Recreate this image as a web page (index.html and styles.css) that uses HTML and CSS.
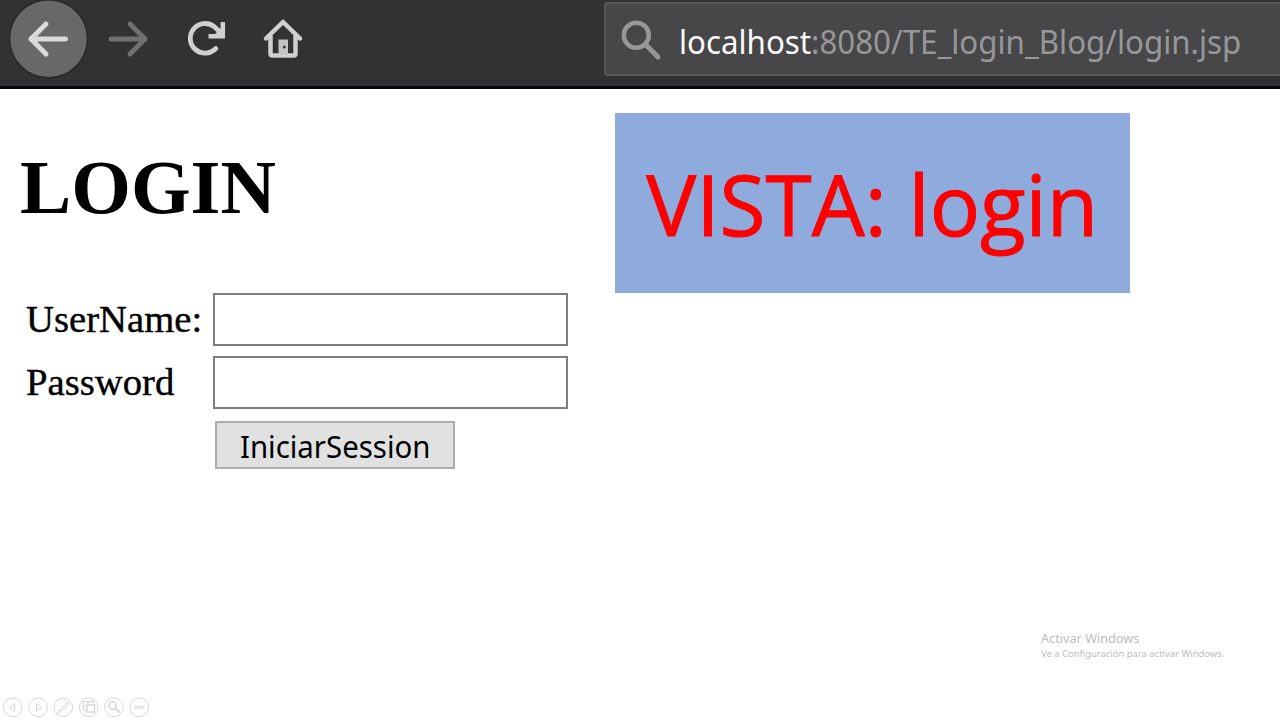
FILE: index.html
```html
<!DOCTYPE html>
<html lang="es">
<head>
<meta charset="utf-8">
<title>Login</title>
<link rel="stylesheet" href="styles.css">
</head>
<body>
<header class="toolbar">
  <svg class="nav" width="320" height="86" viewBox="0 0 320 86" fill="none" stroke-linecap="round" stroke-linejoin="round">
    <circle cx="48.500" cy="38.800" r="39" fill="#68686a" stroke="#29292b" stroke-width="1.500"/>
    <path d="M65.500 39H31M46 24L31 39l15 15" stroke="#dadada" stroke-width="5"/>
    <path d="M111 39h34M130 24l15 15-15 15" stroke="#707072" stroke-width="5"/>
    <path d="M215.800 48.500A14.800 14.800 0 1 1 214 26.500L219 31" stroke="#d0d0d0" stroke-width="4.800"/>
    <path d="M222.800 22V36.300H208.500" stroke="#d0d0d0" stroke-width="4.500" stroke-linecap="butt" stroke-linejoin="miter"/>
    <path d="M212 37L223 26V37Z" fill="#d0d0d0"/>
    <path d="M266 38.500L283 22l17 16.500M270.500 36v17.500q0 2 2 2h21q2 0 2-2V36" stroke="#d0d0d0" stroke-width="4.500"/>
    <path d="M278.500 39.500h9.500v15h-9.500z" fill="#c3c3c3"/>
    <circle cx="284.300" cy="47" r="1.500" fill="#3b3b3d"/>
  </svg>
  <div class="address">
    <svg class="search" width="42" height="42" viewBox="0 0 42 42" fill="none" stroke="#979799" stroke-linecap="round">
      <circle cx="16.300" cy="16.200" r="12.500" stroke-width="4.500"/>
      <path d="M26 26l12 12" stroke-width="5"/>
    </svg>
    <div class="url"><span class="host">localhost</span>:8080/TE_login_Blog/login.jsp</div>
  </div>
</header>
<main class="content">
  <form class="login">
    <h1 class="title">LOGIN</h1>
    <div class="fields">
      <label class="label" for="user">UserName:</label>
      <input class="input" id="user" type="text">
      <label class="label" for="pass">Password</label>
      <input class="input" id="pass" type="password">
      <button class="submit" type="button"><span class="submit-text">IniciarSession</span></button>
    </div>
  </form>
  <div class="banner"><span class="banner-text">VISTA: login</span></div>
</main>
<footer class="footer">
  <div class="notice">
    <div class="notice-title">Activar Windows</div>
    <div class="notice-text">Ve a Configuración para activar Windows.</div>
  </div>
  <svg class="controls" width="156" height="24" viewBox="0 0 156 24" fill="none" stroke="#d6d6d6" stroke-width="1">
    <circle cx="12.700" cy="12.300" r="9.300"/><circle cx="38" cy="12.300" r="9.300"/><circle cx="63.300" cy="12.300" r="9.300"/>
    <circle cx="88.700" cy="12.300" r="9.300"/><circle cx="114" cy="12.300" r="9.300"/><circle cx="139.300" cy="12.300" r="9.300"/>
    <path d="M14.500 8.500v8L9.500 12.500zM36.500 8.500v8l5-4z"/>
    <path d="M68 6.500l-6 6 2 2 5-6.500zM61.500 13l-4 5.500 5.500-4"/>
    <path d="M86 15h-2.500V6.500h9.500V9M83.500 10.500H86M88 6.500V9"/><path d="M87 10h7.500v7H87z" stroke-width="1.500"/>
    <circle cx="112.500" cy="10.500" r="3.700" stroke-width="1.500"/><path d="M115.500 13.500l4 4" stroke-width="2"/>
    <circle cx="135.800" cy="12.300" r="1.200"/><circle cx="139.300" cy="12.300" r="1.200"/><circle cx="142.800" cy="12.300" r="1.200"/>
  </svg>
</footer>
</body>
</html>
```
FILE: styles.css
```css
* { box-sizing: border-box; }
body {
  margin: 0;
  width: 1280px;
  height: 720px;
  display: flex;
  flex-direction: column;
  overflow: hidden;
  background: #fff;
}
.toolbar {
  height: 89px;
  flex: none;
  display: flex;
  justify-content: space-between;
  background: #323234;
  border-bottom: 3px solid #09090b;
}
.nav { display: block; flex: none; }
.address {
  width: 676px;
  height: 74px;
  margin-top: 2px;
  padding: 15px 0 0 14px;
  display: flex;
  flex: none;
  background: #474749;
  border: 2px solid #58585a;
  border-right: 0;
  border-radius: 4px 0 0 4px;
}
.search { flex: none; }
.url {
  margin: 1px 0 0 17px;
  font: 32px/44px "Noto Sans", sans-serif;
  white-space: nowrap;
  color: #979799;
  transform: scaleX(.977);
  transform-origin: left;
}
.host { color: #f9f9fa; }
.content {
  height: 531px;
  display: flex;
  align-items: flex-start;
}
.login { width: 615px; padding: 54px 0 0 20px; }
.title {
  margin: 0;
  font: bold 76px/88px "Liberation Serif", serif;
  color: #000;
  transform: scaleX(1.01);
  transform-origin: left;
}
.fields {
  margin: 62px 0 0 6px;
  display: grid;
  grid-template-columns: 187px 355px;
  grid-template-rows: 53px 53px 48px;
  row-gap: 10px;
}
.label {
  font: 38.700px/52px "Liberation Serif", serif;
  color: #000;
  -webkit-text-stroke: .4px #000;
}
.input {
  width: 355px;
  height: 53px;
  margin: 0;
  padding: 4px 8px;
  border: 2px solid #7e7e7e;
  border-radius: 0;
  background: #fff;
  font: 30px "Noto Sans", sans-serif;
}
.submit {
  grid-column: 2;
  width: 240px;
  height: 48px;
  margin: 2px 0 0 2px;
  padding: 3px 0 0;
  display: flex;
  align-items: center;
  justify-content: center;
  border: 2px solid #adadad;
  background: #e1e1e1;
  color: #000;
}
.submit-text {
  font: 30px/44px "Noto Sans", sans-serif;
  transform: scaleX(.98);
}
.banner {
  width: 515px;
  height: 180px;
  margin-top: 24px;
  display: flex;
  align-items: center;
  justify-content: center;
  background: #8faadc;
}
.banner-text {
  font: 85px/100px "Open Sans", sans-serif;
  white-space: nowrap;
  color: #f00;
  -webkit-text-stroke: 1px #f00;
  transform: scaleX(.986);
}
.footer {
  height: 100px;
  display: flex;
  flex-direction: column;
}
.notice {
  height: 76px;
  margin: 9px 0 0 1041px;
  font-family: "Noto Sans", sans-serif;
  white-space: nowrap;
  color: #bdbdbd;
}
.notice-title { font-size: 12.700px; line-height: 18px; }
.notice-text { font-size: 9.450px; line-height: 13px; }
.controls { flex: none; margin-top: -10px; }
```
